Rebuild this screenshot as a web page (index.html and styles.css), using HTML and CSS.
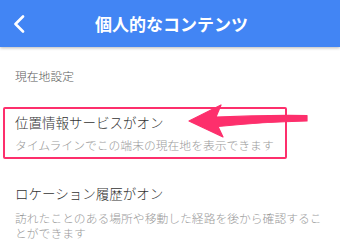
FILE: index.html
```html
<!DOCTYPE html>
<html lang="ja">
<head>
<meta charset="utf-8">
<link rel="stylesheet" href="styles.css">
</head>
<body>
<header class="appbar">
  <span class="back">
    <svg width="14" height="18" viewBox="0 0 14 18"><path d="M11 1.5 L3.5 9 L11 16.5" fill="none" stroke="#fff" stroke-width="2.6" stroke-linecap="round" stroke-linejoin="round"/></svg>
  </span>
  <h1 class="title">個人的なコンテンツ</h1>
  <span></span>
</header>
<main class="content">
  <div class="section-label">現在地設定</div>
  <div class="item highlighted">
    <div class="item-title">位置情報サービスがオン</div>
    <div class="item-sub">タイムラインでこの端末の現在地を表示できます</div>
  </div>
  <div class="item">
    <div class="item-title">ロケーション履歴がオン</div>
    <div class="item-sub">訪れたことのある場所や移動した経路を後から確認することができます</div>
  </div>
  <svg class="arrow" width="340" height="249" viewBox="0 0 340 249"><path d="M189 121 L221 105 L216 117 Q260 115 307 115.5 L307 121 Q262 122 218 126.5 L223 137 Z" fill="#fd2f6c" stroke="#fd2f6c" stroke-width="1.2" stroke-linejoin="round"/></svg>
</main>
</body>
</html>
```
FILE: styles.css
```css
html, body {
  margin: 0;
  padding: 0;
  background: #fff;
  font-family: "Noto Sans CJK JP", "Noto Sans", sans-serif;
  width: 340px;
  height: 249px;
  overflow: hidden;
}
.appbar {
  height: 47px;
  background: #4285f4;
  box-shadow: 0 1px 3px rgba(0, 0, 0, 0.28);
  display: grid;
  grid-template-columns: 1fr auto 1fr;
  align-items: center;
  position: relative;
  z-index: 1;
}
.back {
  display: flex;
  align-items: center;
  padding-left: 12px;
  height: 47px;
}
.title {
  margin: 0;
  font-size: 17px;
  font-weight: 700;
  color: #fff;
  line-height: 20px;
  padding-left: 3px;
}
.content {
  position: relative;
}
.section-label {
  padding: 21px 0 0 15px;
  font-size: 11.8px;
  line-height: 16px;
  color: #5a5a5a;
  font-weight: 300;
}
.item {
  padding: 0 12px 0 15px;
}
.item.highlighted {
  margin: 23px 0 0 3px;
  width: 284px;
  box-sizing: border-box;
  border: 2px solid #fd2f6c;
  border-radius: 2px;
  padding: 4px 0 4px 10px;
}
.item-title {
  font-size: 13.5px;
  line-height: 18px;
  color: #333;
  font-weight: 300;
}
.item-sub {
  font-size: 11.8px;
  line-height: 16px;
  color: #9a9a9a;
  margin-top: 6px;
  font-weight: 300;
}
.item:not(.highlighted) {
  margin-top: 25px;
}
.item:not(.highlighted) .item-sub {
  line-height: 15px;
  margin-top: 7.5px;
}
.arrow {
  position: absolute;
  left: 0;
  top: -47px;
  pointer-events: none;
}
```
